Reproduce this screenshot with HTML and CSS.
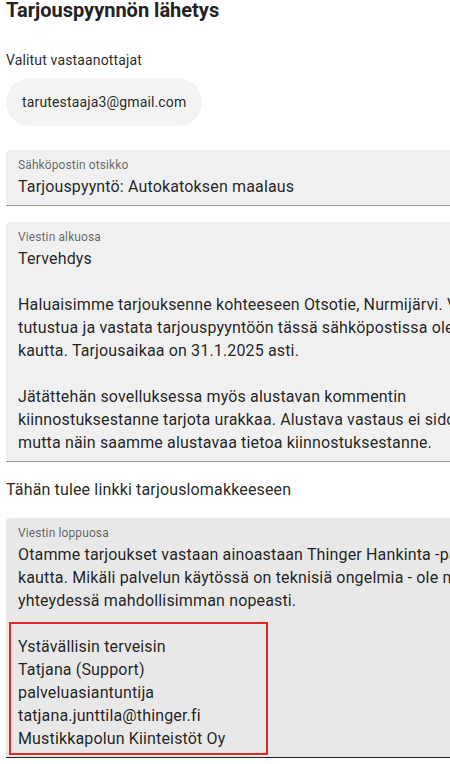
FILE: index.html
```html
<!DOCTYPE html>
<html lang="fi">
<head>
<meta charset="utf-8">
<title>Tarjouspyynnön lähetys</title>
<link rel="stylesheet" href="styles.css">
</head>
<body>
<main class="page">
  <h1 class="title">Tarjouspyynnön lähetys</h1>
  <section class="recipients">
    <div class="section-label">Valitut vastaanottajat</div>
    <div class="chips">
      <span class="chip">tarutestaaja3@gmail.com</span>
    </div>
  </section>
  <div class="field field-subject">
    <label class="field-label">Sähköpostin otsikko</label>
    <div class="field-value">Tarjouspyyntö: Autokatoksen maalaus</div>
  </div>
  <div class="field field-start">
    <label class="field-label">Viestin alkuosa</label>
<div class="field-value multiline">Tervehdys

Haluaisimme tarjouksenne kohteeseen Otsotie, Nurmijärvi. Voitte
tutustua ja vastata tarjouspyyntöön tässä sähköpostissa olevan linkin
kautta. Tarjousaikaa on 31.1.2025 asti.

Jätättehän sovelluksessa myös alustavan kommentin
kiinnostuksestanne tarjota urakkaa. Alustava vastaus ei sido teitä mihinkään,
mutta näin saamme alustavaa tietoa kiinnostuksestanne.</div>
  </div>
  <p class="link-note">Tähän tulee linkki tarjouslomakkeeseen</p>
  <div class="field field-end is-hover">
    <label class="field-label">Viestin loppuosa</label>
<div class="field-value multiline">Otamme tarjoukset vastaan ainoastaan Thinger Hankinta -palvelun
kautta. Mikäli palvelun käytössä on teknisiä ongelmia - ole meihin
yhteydessä mahdollisimman nopeasti.

Ystävällisin terveisin
Tatjana (Support)
palveluasiantuntija
tatjana.junttila@thinger.fi
Mustikkapolun Kiinteistöt Oy</div>
    <div class="highlight"></div>
  </div>
</main>
</body>
</html>
```

FILE: styles.css
```css
html, body {
  margin: 0;
  padding: 0;
  background: #ffffff;
  overflow: hidden;
}

body {
  font-family: Roboto, "Liberation Sans", Arial, sans-serif;
  color: rgba(0, 0, 0, 0.87);
}

.page {
  width: 700px;
  padding: 0 0 0 6px;
  display: flex;
  flex-direction: column;
}

.title {
  margin: 0;
  font-size: 20px;
  line-height: 20px;
  font-weight: 700;
  color: #222222;
}

.recipients {
  margin-top: 30px;
  display: flex;
  flex-direction: column;
  gap: 8px;
}

.section-label {
  font-size: 14px;
  line-height: 20px;
  letter-spacing: 0.01071em;
  color: rgba(0, 0, 0, 0.87);
}

.chips {
  display: flex;
}

.chip {
  display: inline-flex;
  align-items: center;
  height: 48px;
  padding: 0 16px;
  border-radius: 24px;
  background: #f3f3f3;
  font-size: 14px;
  letter-spacing: 0.01071em;
  color: rgba(0, 0, 0, 0.87);
}

.field {
  position: relative;
  width: 640px;
  background: #f0f0f0;
  border-radius: 4px 4px 0 0;
  border-bottom: 1px solid #949494;
  padding: 7px 12px 7px 12px;
  overflow: hidden;
  box-sizing: border-box;
}

.field.is-hover {
  background: #e8e8e8;
  border-bottom-color: #222222;
}

.field-subject {
  margin-top: 24px;
}

.field-start {
  margin-top: 16px;
}

.field-end {
  margin-top: 16px;
}

.field-label {
  display: block;
  font-size: 12px;
  line-height: 17px;
  letter-spacing: 0.00938em;
  color: rgba(0, 0, 0, 0.6);
}

.field-value {
  margin-top: 1px;
  font-size: 16px;
  line-height: 23px;
  letter-spacing: 0.00938em;
  color: rgba(0, 0, 0, 0.87);
  white-space: nowrap;
}

.field-value.multiline {
  white-space: pre;
}

.link-note {
  margin: 16px 0 0 0;
  font-size: 16px;
  line-height: 24px;
  letter-spacing: 0.00938em;
  color: rgba(0, 0, 0, 0.87);
}

.highlight {
  position: absolute;
  left: 3px;
  top: 104px;
  width: 259px;
  height: 133px;
  border: 2px solid #e32626;
  box-sizing: border-box;
  pointer-events: none;
}
```
